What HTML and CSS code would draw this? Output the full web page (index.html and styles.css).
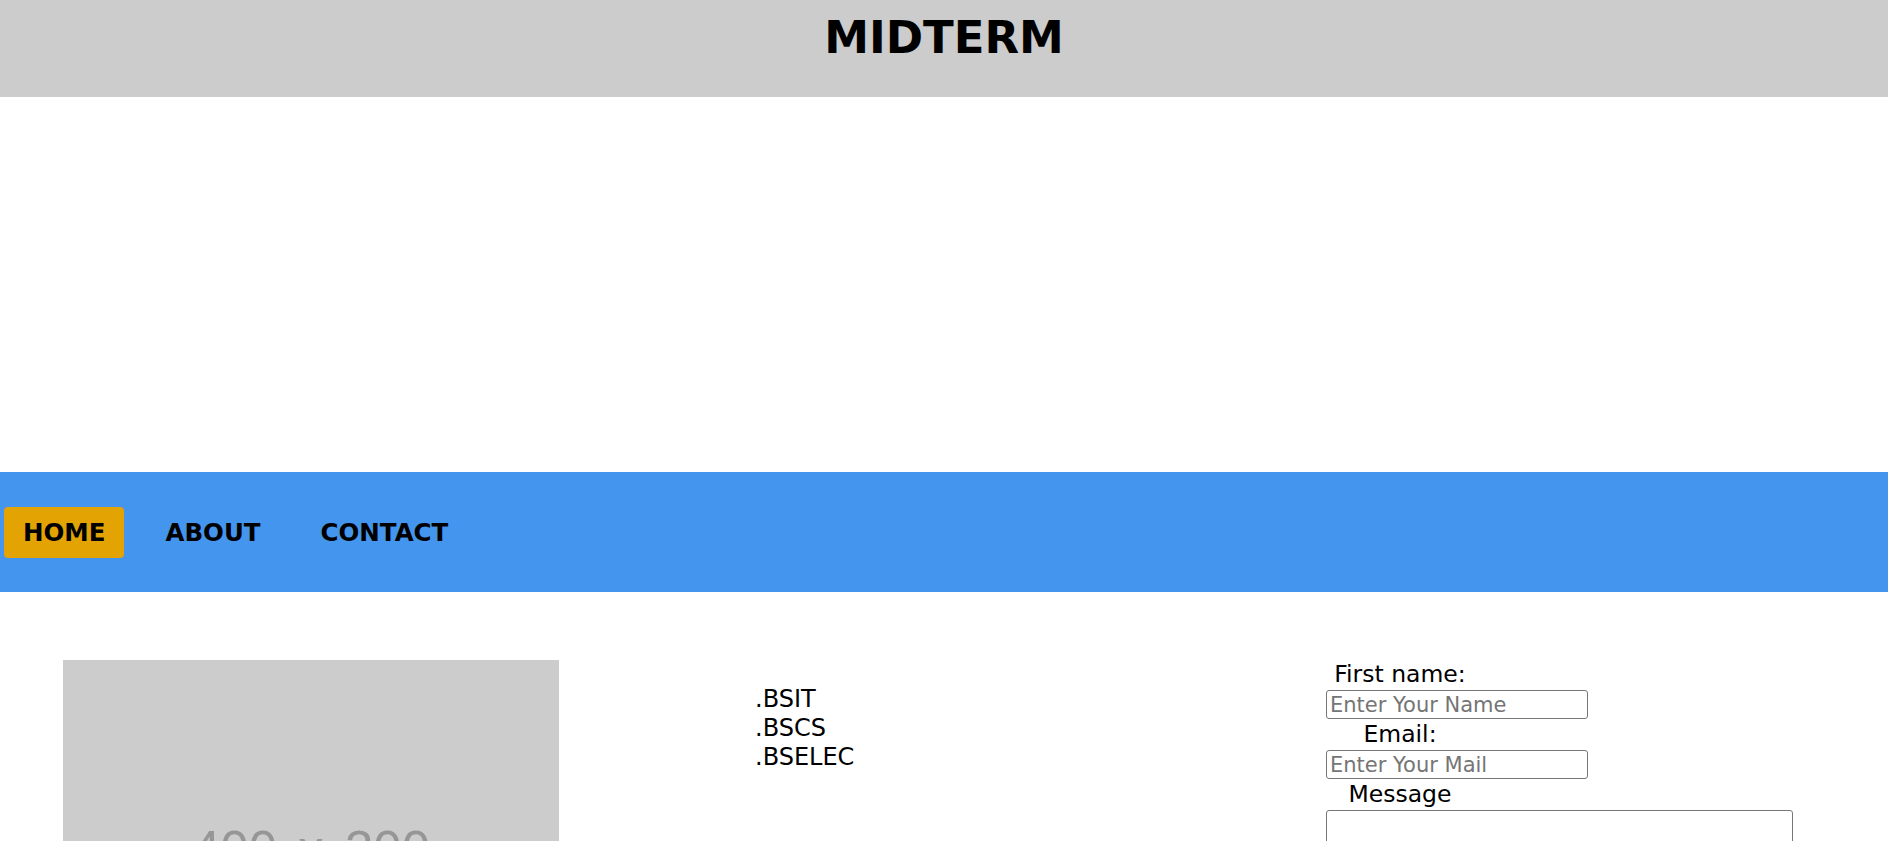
FILE: index.html
```html
<!DOCTYPE html>
<html lang="en">
<head>
<meta charset="utf-8">
<title>MIDTERM</title>
<link rel="stylesheet" href="styles.css">
</head>
<body>
<header class="top">
  <h1 class="title">MIDTERM</h1>
</header>
<div class="banner"></div>
<nav class="nav">
  <a class="nav-link active" href="#">HOME</a>
  <a class="nav-link" href="#">ABOUT</a>
  <a class="nav-link" href="#">CONTACT</a>
</nav>
<main class="content">
  <div class="col-img">
    <div class="placeholder">400 x 300</div>
  </div>
  <div class="col-list">
    <div class="list">
      <div>.BSIT</div>
      <div>.BSCS</div>
      <div>.BSELEC</div>
    </div>
  </div>
  <form class="form">
    <label class="lbl" for="fn">First name:</label>
    <input class="field" id="fn" type="text" placeholder="Enter Your Name">
    <label class="lbl" for="em">Email:</label>
    <input class="field" id="em" type="text" placeholder="Enter Your Mail">
    <label class="lbl" for="msg">Message</label>
    <textarea class="area" id="msg"></textarea>
  </form>
</main>
</body>
</html>
```

FILE: styles.css
```css
html, body {
  margin: 0;
  padding: 0;
  background: #fff;
}
body {
  font-family: "DejaVu Sans", sans-serif;
  color: #000;
}
.top {
  background: #cccccc;
  height: 97px;
  box-sizing: border-box;
  padding-top: 15px;
}
.title {
  margin: 0;
  text-align: center;
  font-size: 45px;
  line-height: 45px;
  font-weight: bold;
}
.banner {
  height: 375px;
}
.nav {
  background: #4495ed;
  height: 120px;
  display: flex;
  align-items: center;
  gap: 22px;
  padding-left: 4px;
}
.nav-link {
  display: block;
  height: 51px;
  line-height: 51px;
  padding: 0 19px;
  font-size: 24.5px;
  font-weight: bold;
  color: #000;
  text-decoration: none;
  border-radius: 4px;
}
.nav-link.active {
  background: #e2a303;
}
.content {
  display: grid;
  grid-template-columns: 692px 571px 1fr;
  padding: 68px 0 0 63px;
}
.placeholder {
  width: 496px;
  height: 372px;
  box-sizing: border-box;
  padding-top: 7px;
  display: flex;
  align-items: center;
  justify-content: center;
  background: #cccccc;
  color: #969696;
  font-family: "Liberation Sans", Arial, sans-serif;
  font-size: 51px;
  line-height: 51px;
  word-spacing: 7px;
  white-space: nowrap;
}
.list {
  padding-top: 25px;
  font-size: 24px;
  line-height: 29px;
}
.form {
  display: flex;
  flex-direction: column;
  align-items: flex-start;
  margin-top: -1px;
}
.lbl {
  display: block;
  width: 148px;
  text-align: center;
  font-size: 23.5px;
  line-height: 31px;
}
.field {
  width: 262px;
  height: 29px;
  box-sizing: border-box;
  border: 1px solid #767676;
  border-radius: 3px;
  padding: 0 3px;
  font-family: "DejaVu Sans", sans-serif;
  font-size: 21px;
  margin: 0;
}
.field::placeholder {
  color: #757575;
}
.area {
  width: 467px;
  height: 70px;
  box-sizing: border-box;
  border: 1px solid #767676;
  border-radius: 3px;
  margin: 0;
  font-family: "DejaVu Sans", sans-serif;
  font-size: 18px;
}
```
